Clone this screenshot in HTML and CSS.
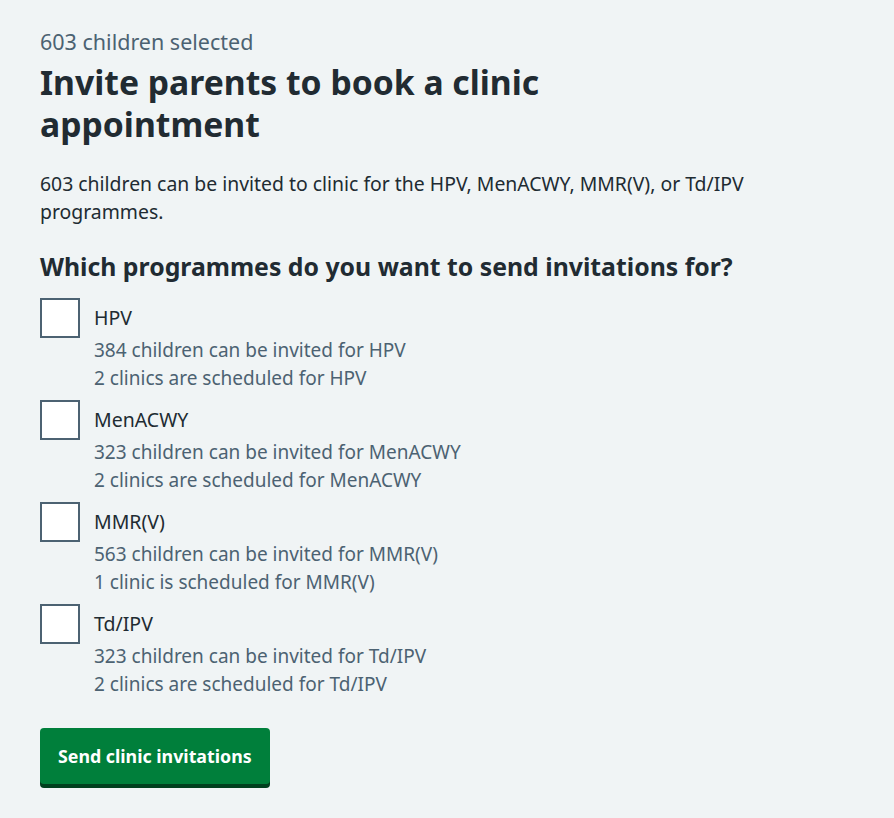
FILE: index.html
```html
<!DOCTYPE html>
<html lang="en">
<head>
<meta charset="utf-8">
<title>Invite parents to book a clinic appointment</title>
<link rel="stylesheet" href="styles.css">
</head>
<body>
<main class="page">
  <span class="caption">603 children selected</span>
  <h1 class="title">Invite parents to book a clinic appointment</h1>
  <p class="lead">603 children can be invited to clinic for the HPV, MenACWY, MMR(V), or Td/IPV programmes.</p>
  <form class="form">
    <fieldset class="fieldset">
      <legend class="legend">Which programmes do you want to send invitations for?</legend>
      <div class="checkboxes">
        <label class="item">
          <input type="checkbox" class="box">
          <span class="text">
            <span class="label">HPV</span>
            <span class="hint">384 children can be invited for HPV</span>
            <span class="hint">2 clinics are scheduled for HPV</span>
          </span>
        </label>
        <label class="item">
          <input type="checkbox" class="box">
          <span class="text">
            <span class="label">MenACWY</span>
            <span class="hint">323 children can be invited for MenACWY</span>
            <span class="hint">2 clinics are scheduled for MenACWY</span>
          </span>
        </label>
        <label class="item">
          <input type="checkbox" class="box">
          <span class="text">
            <span class="label">MMR(V)</span>
            <span class="hint">563 children can be invited for MMR(V)</span>
            <span class="hint">1 clinic is scheduled for MMR(V)</span>
          </span>
        </label>
        <label class="item">
          <input type="checkbox" class="box">
          <span class="text">
            <span class="label">Td/IPV</span>
            <span class="hint">323 children can be invited for Td/IPV</span>
            <span class="hint">2 clinics are scheduled for Td/IPV</span>
          </span>
        </label>
      </div>
    </fieldset>
    <button type="button" class="button">Send clinic invitations</button>
  </form>
</main>
</body>
</html>
```

FILE: styles.css
```css
html, body {
  margin: 0;
  padding: 0;
  background: #f0f4f5;
}
body {
  font-family: "Noto Sans", "Open Sans", sans-serif;
  color: #212b32;
}
.page {
  display: flex;
  flex-direction: column;
  padding: 28px 40px 30px;
}
.caption {
  display: block;
  font-size: 21.5px;
  line-height: 28px;
  color: #4c6272;
  margin-bottom: 5px;
}
.title {
  margin: 0 0 25px;
  max-width: 560px;
  font-size: 33.7px;
  line-height: 42px;
  font-weight: 700;
}
.lead {
  margin: 0 0 24px;
  max-width: 760px;
  font-size: 19.4px;
  line-height: 28px;
}
.form {
  display: flex;
  flex-direction: column;
  align-items: flex-start;
}
.fieldset {
  margin: 0;
  padding: 0;
  border: 0;
}
.legend {
  padding: 0;
  margin-bottom: 16px;
  font-size: 24.8px;
  line-height: 32px;
  font-weight: 700;
}
.checkboxes {
  display: flex;
  flex-direction: column;
  gap: 8px;
}
.item {
  display: flex;
  gap: 14px;
  align-items: flex-start;
}
.box {
  appearance: none;
  margin: 0;
  width: 40px;
  height: 40px;
  box-sizing: border-box;
  border: 2px solid #4c6272;
  background: #fff;
  flex: none;
}
.text {
  display: flex;
  flex-direction: column;
  padding-top: 6px;
}
.label {
  font-size: 19.5px;
  line-height: 28px;
  margin-bottom: 4px;
}
.hint {
  font-size: 19px;
  line-height: 28px;
  color: #4c6272;
}
.button {
  margin-top: 30px;
  font-family: inherit;
  font-size: 17.8px;
  font-weight: 700;
  line-height: 24px;
  color: #fff;
  background: #007f3b;
  border: 0;
  border-radius: 4px;
  padding: 16px 18px;
  box-shadow: 0 4px 0 #00401e;
}
```
